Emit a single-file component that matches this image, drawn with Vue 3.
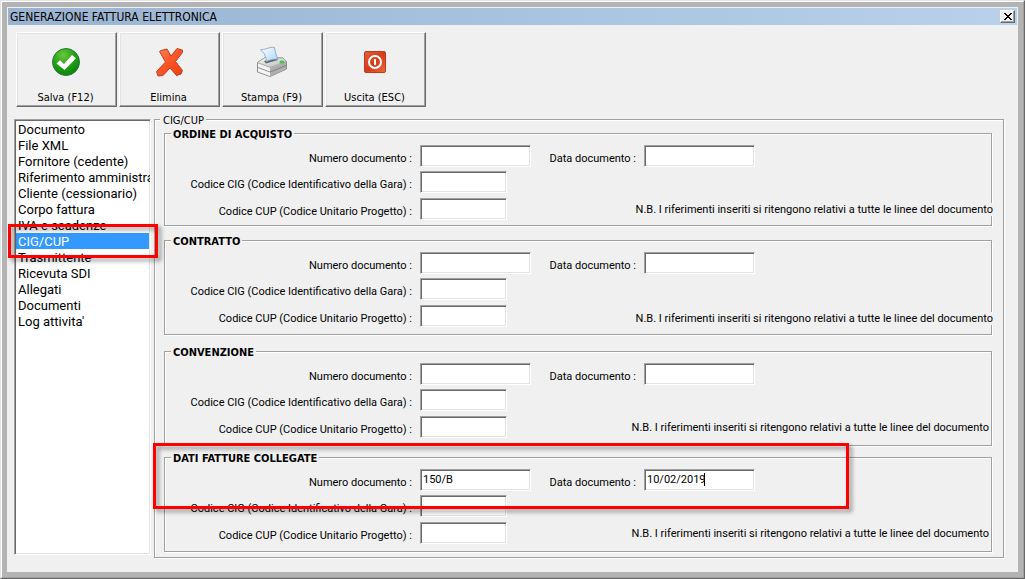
<script setup>
import { ref, reactive } from 'vue'

const tools = [
  { id: 'save', label: 'Salva (F12)' },
  { id: 'delete', label: 'Elimina' },
  { id: 'print', label: 'Stampa (F9)' },
  { id: 'exit', label: 'Uscita (ESC)' },
]

const sections = [
  'Documento',
  'File XML',
  'Fornitore (cedente)',
  'Riferimento amministra',
  'Cliente (cessionario)',
  'Corpo fattura',
  'IVA e scadenze',
  'CIG/CUP',
  'Trasmittente',
  'Ricevuta SDI',
  'Allegati',
  'Documenti',
  "Log attivita'",
]
const current = ref('CIG/CUP')

const groups = reactive([
  { id: 'ordine', title: 'ORDINE DI ACQUISTO', number: '', date: '', cig: '', cup: '' },
  { id: 'contratto', title: 'CONTRATTO', number: '', date: '', cig: '', cup: '' },
  { id: 'convenzione', title: 'CONVENZIONE', number: '', date: '', cig: '', cup: '' },
  { id: 'collegate', title: 'DATI FATTURE COLLEGATE', number: '150/B', date: '10/02/2019', cig: '', cup: '' },
])
</script>

<template>
  <div class="window">
    <div class="bevel">
      <div class="client">
        <header class="titlebar">
          <h1>GENERAZIONE FATTURA ELETTRONICA</h1>
          <button class="close" type="button" aria-label="Chiudi">
            <svg width="8" height="7" viewBox="0 0 8 7" shape-rendering="crispEdges">
              <path d="M0 0h2v1h1v1h2V1h1V0h2v1H7v1H6v1H5v1h1v1h1v1h1v1H6V6H5V5H3v1H2v1H0V6h1V5h1V4h1V3H2V2H1V1H0z" fill="#000" />
            </svg>
          </button>
        </header>

        <div class="toolbar">
          <button v-for="t in tools" :key="t.id" class="tool" type="button">
            <svg v-if="t.id === 'save'" width="32" height="32" viewBox="0 0 32 32">
              <defs>
                <radialGradient id="green" cx=".4" cy=".25" r=".85">
                  <stop offset="0" stop-color="#6cc63c" />
                  <stop offset=".5" stop-color="#22a015" />
                  <stop offset="1" stop-color="#087a08" />
                </radialGradient>
              </defs>
              <circle cx="16" cy="16" r="13.5" fill="url(#green)" stroke="#2c7a3c" />
              <path d="M6.500 17.500l3.500-3.200 4 3.700 8-9 4 3.200L14.500 24z" fill="#fff" />
            </svg>
            <svg v-else-if="t.id === 'delete'" width="32" height="32" viewBox="0 0 32 32">
              <defs>
                <linearGradient id="red" x1="0" y1="0" x2="1" y2="1">
                  <stop offset="0" stop-color="#ff8552" />
                  <stop offset=".5" stop-color="#fb5426" />
                  <stop offset="1" stop-color="#e8400f" />
                </linearGradient>
              </defs>
              <path d="M6.500 5.500L8 4.500 14 3l4 7L24 2.500l5.500 1.500v2.500L22.500 15.500l7 9-1.500 3.500-4.500 1.500L17 22l-7 7.500-5 .5-1.500-4.500L12.500 16z" fill="url(#red)" stroke="#b8412a" stroke-linejoin="round" />
            </svg>
            <svg v-else-if="t.id === 'print'" width="32" height="32" viewBox="0 0 32 32">
              <defs>
                <linearGradient id="sheet" x1="0" y1="0" x2="1" y2="1">
                  <stop offset="0" stop-color="#fff" />
                  <stop offset="1" stop-color="#a9d3fb" />
                </linearGradient>
                <linearGradient id="body" x1="0" y1="0" x2="1" y2="1">
                  <stop offset="0" stop-color="#fafafa" />
                  <stop offset="1" stop-color="#b4b4b4" />
                </linearGradient>
              </defs>
              <path d="M1.500 16.500L9 11.500 27 12l3.500 3.500v7.500L14 30.500 1.500 26z" fill="#d5d5d5" stroke="#8e8e8e" stroke-linejoin="round" />
              <path d="M1.500 16.500L9 11.500 27 12l3.500 3.500L14 21.500z" fill="url(#body)" stroke="#9a9a9a" stroke-width=".7" />
              <path d="M2 17.500l12 4.500v8L2 25.500z" fill="#f4f4f4" />
              <path d="M14 22l16-6v6.500L14 30z" fill="#adadad" />
              <path d="M2 21.500l12 4.500 16-6.500" fill="none" stroke="#777" stroke-width=".8" />
              <path d="M8 15l12-2.500 2 1.500-12 3.500z" fill="#666" />
              <path d="M4.500 4c3-1 4-.5 6.500-1.500 3-1 5-1.500 7.500-1 .5 3 1.500 8 3.500 11.500-4 .200-7.500.5-11.500 2.500C10 11 8.500 6.500 4.500 4z" fill="url(#sheet)" stroke="#7f9dbb" stroke-width=".8" />
              <ellipse cx="26" cy="16" rx="2.500" ry="1.500" fill="#3fc640" />
            </svg>
            <svg v-else width="32" height="32" viewBox="0 0 32 32">
              <defs>
                <linearGradient id="power" x1="0" y1="0" x2="1" y2="1">
                  <stop offset="0" stop-color="#e2603c" />
                  <stop offset=".5" stop-color="#d63c18" />
                  <stop offset="1" stop-color="#ee6a3c" />
                </linearGradient>
              </defs>
              <rect x="5.500" y="5.500" width="21" height="21" rx="1.500" fill="url(#power)" stroke="#c0391c" />
              <circle cx="16" cy="16" r="6" fill="none" stroke="#fff" stroke-width="2" />
              <path d="M16 13v6" stroke="#fff" stroke-width="2" />
            </svg>
            <span>{{ t.label }}</span>
          </button>
        </div>

        <div class="main">
          <nav class="sections" aria-label="Sezioni">
            <button
              v-for="s in sections"
              :key="s"
              type="button"
              class="section"
              :class="{ selected: s === current }"
              @click="current = s"
            >{{ s }}</button>
          </nav>

          <fieldset class="panel">
            <legend>CIG/CUP</legend>
            <fieldset v-for="g in groups" :key="g.id" class="group" :class="g.id">
              <legend>{{ g.title }}</legend>
              <div class="fields">
                <label :for="g.id + '-num'">Numero documento :</label>
                <input :id="g.id + '-num'" v-model="g.number" type="text" />
                <label :for="g.id + '-date'">Data documento :</label>
                <span class="date">
                  <input :id="g.id + '-date'" v-model="g.date" type="text" />
                  <i v-if="g.date" class="caret"></i>
                </span>
                <label class="first" :for="g.id + '-cig'">Codice CIG (Codice Identificativo della Gara) :</label>
                <input :id="g.id + '-cig'" v-model="g.cig" class="code" type="text" />
                <label class="first" :for="g.id + '-cup'">Codice CUP (Codice Unitario Progetto) :</label>
                <input :id="g.id + '-cup'" v-model="g.cup" class="code" type="text" />
                <p class="note">N.B. I riferimenti inseriti si ritengono relativi a tutte le linee del documento</p>
              </div>
            </fieldset>
            <div class="mark mark-group"></div>
          </fieldset>
          <div class="mark mark-section"></div>
        </div>
      </div>
    </div>
  </div>
</template>

<style>
body {
  margin: 0;
  background: #f0f0f0;
}
</style>

<style scoped>
* {
  box-sizing: border-box;
}
.window {
  display: flex;
  min-height: 100vh;
  border: 1px solid;
  border-color: #e3e3e3 #696969 #696969 #e3e3e3;
  font: 11px/14px Tahoma, "DejaVu Sans Condensed", "DejaVu Sans", sans-serif;
  color: #000;
}
.bevel {
  flex: 1;
  display: flex;
  border: 1px solid;
  border-color: #fff #a0a0a0 #a0a0a0 #fff;
}
.client {
  flex: 1;
  min-width: 0;
  display: flex;
  flex-direction: column;
  border: 5px solid #b4b4b4;
  background: #f0f0f0;
}
button {
  font: inherit;
  color: inherit;
  margin: 0;
  padding: 0;
}
.titlebar {
  display: flex;
  align-items: center;
  justify-content: space-between;
  height: 17px;
  margin: 1px 1px 0;
  padding: 0 2px;
  background: linear-gradient(90deg, #99b4d1, #b9d1ea);
}
h1 {
  margin: 0;
  font-size: 12px;
  font-weight: normal;
  line-height: 16px;
}
.close {
  display: grid;
  place-items: center;
  width: 15px;
  height: 13px;
  border: 1px solid;
  border-color: #fff #696969 #696969 #fff;
  background: #f0f0f0;
  box-shadow: inset -1px -1px 0 #a0a0a0;
}
.toolbar {
  display: flex;
  gap: 2px;
  padding: 7px 9px 6px;
}
.tool {
  display: flex;
  flex-direction: column;
  align-items: center;
  gap: 13px;
  width: 101px;
  height: 75px;
  padding: 13px 2px 0 0;
  border: 1px solid;
  border-color: #fff #696969 #696969 #fff;
  background: #f0f0f0;
  box-shadow: inset -1px -1px 0 #a0a0a0, inset 1px 1px 0 #e3e3e3;
}
.main {
  position: relative;
  flex: 1;
  display: flex;
  gap: 3px;
  padding: 0 14px 14px 7px;
}
.sections {
  display: flex;
  flex-direction: column;
  width: 137px;
  margin: 6px 0 3px;
  overflow: hidden;
  border: 1px solid;
  border-color: #a0a0a0 #fff #fff #a0a0a0;
  background: #fff;
  box-shadow: inset 1px 1px 0 #696969, inset -1px -1px 0 #e3e3e3;
  padding: 1px;
}
.section {
  height: 16px;
  padding: 2px 2px 0;
  border: 0;
  background: none;
  font-family: Tahoma, Roboto, sans-serif;
  font-size: 13px;
  line-height: 14px;
  text-align: left;
  white-space: nowrap;
}
.section.selected {
  background: #3399ff;
  color: #fff;
}
fieldset {
  min-width: 0;
  margin: 0;
  border: 1px solid #a0a0a0;
  box-shadow: 1px 1px 0 #fff, inset 1px 1px 0 #fff;
}
legend {
  height: 13px;
  line-height: 16px;
  background: #f0f0f0;
}
.panel {
  position: relative;
  flex: 1;
  padding: 1px 11px 5px 9px;
}
.panel > legend {
  margin-left: -4px;
  padding: 0 2px 0 3px;
}
.group {
  margin-bottom: 8px;
  padding: 5px 0 7px;
}
.group > legend {
  margin-left: 6px;
  padding: 0 2px;
  font-weight: bold;
}
.group.ordine {
  padding-bottom: 5px;
}
.group.convenzione {
  margin-top: 10px;
  margin-bottom: 5px;
}
.group.collegate {
  margin-bottom: 0;
}
.fields {
  display: grid;
  grid-template-columns: 247px 111px 97px 111px 1fr;
  grid-template-rows: 26px 27px 22px;
  column-gap: 8px;
  font-family: Tahoma, Roboto, sans-serif;
}
.fields label {
  padding-top: 7px;
  text-align: right;
  white-space: nowrap;
}
.fields .first {
  grid-column: 1;
}
input {
  display: block;
  width: 111px;
  height: 22px;
  padding: 0 2px 2px;
  border: 1px solid;
  border-color: #a0a0a0 #fff #fff #a0a0a0;
  border-radius: 0;
  outline: 0;
  background: #fff;
  box-shadow: inset 1px 1px 0 #696969, inset -1px -1px 0 #e3e3e3;
  color: #000;
  font: inherit;
}
input.code {
  width: 87px;
}
.date {
  position: relative;
}
.caret {
  position: absolute;
  top: 4px;
  left: 60px;
  width: 1px;
  height: 13px;
  background: #000;
}
.note {
  grid-column: 3 / 6;
  justify-self: end;
  margin: 5px 2px 0 0;
  height: 13px;
  white-space: nowrap;
  background: #f0f0f0;
}
.ordine .note,
.contratto .note {
  margin-right: -2px;
}
.contratto .note {
  margin-top: 7px;
}
.mark {
  position: absolute;
  border: 3px solid #f00;
  filter: drop-shadow(3px 3px 2px rgba(0, 0, 0, 0.4));
  pointer-events: none;
}
.mark-section {
  top: 111px;
  left: 1px;
  width: 150px;
  height: 34px;
}
.mark-group {
  left: -2px;
  bottom: 48px;
  width: 696px;
  height: 66px;
}
</style>
